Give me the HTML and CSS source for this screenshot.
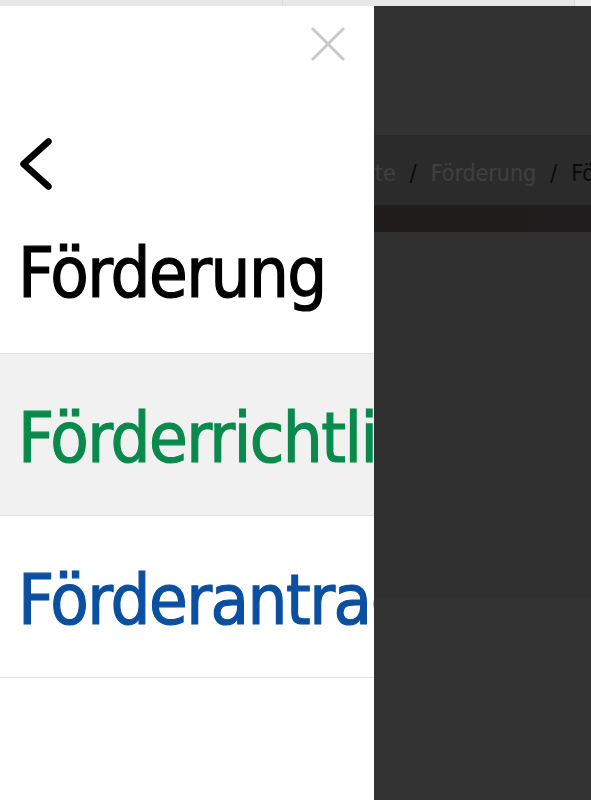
FILE: index.html
```html
<!DOCTYPE html>
<html lang="de">
<head>
    <meta charset="UTF-8">
    <meta name="viewport" content="width=device-width, initial-scale=1.0">
    <title>Förderung</title>
    <link rel="stylesheet" href="styles.css">
</head>
<body>
    <div class="topbar">
        <span class="tab"></span>
        <span class="tab"></span>
        <span class="tab"></span>
    </div>
    <div class="stage">
        <div class="page">
            <header class="site-header"></header>
            <nav class="crumbs">
                <a href="#">Startseite</a>
                <span class="sep">/</span>
                <a href="#">Förderung</a>
                <span class="sep">/</span>
                <span class="current">Förderrichtlinien</span>
            </nav>
            <div class="hero-strip"></div>
            <main class="content"></main>
            <footer class="site-foot"></footer>
        </div>
        <div class="backdrop"></div>
        <aside class="drawer">
            <div class="drawer-head">
                <button class="close" aria-label="Schließen">
                    <svg width="34" height="34" viewBox="0 0 34 34">
                        <path d="M2 2 L32 32 M32 2 L2 32" stroke="#c9c9c9" stroke-width="3" stroke-linecap="round" fill="none"/>
                    </svg>
                </button>
            </div>
            <button class="back" aria-label="Zurück">
                <svg width="32" height="52" viewBox="0 0 32 52">
                    <path d="M28.5 3.5 L3.5 26 L28.5 48.5" stroke="#000" stroke-width="6.5" stroke-linecap="round" stroke-linejoin="round" fill="none"/>
                </svg>
            </button>
            <h2 class="drawer-title">Förderung</h2>
            <ul class="drawer-menu">
                <li class="active"><a href="#">Förderrichtlinien</a></li>
                <li><a href="#">Förderantrag</a></li>
            </ul>
        </aside>
    </div>
</body>
</html>
```

FILE: styles.css
```css
body {
    margin: 0;
    font-family: "DejaVu Sans Condensed", "DejaVu Sans", sans-serif;
    font-stretch: condensed;
    background-color: #c4c4c4;
    overflow: hidden;
}
.topbar {
    display: grid;
    grid-template-columns: 283px 292px 1fr;
    height: 6px;
    background-color: #e7e7e7;
}
.tab {
    border-right: 1px solid #d9d9d9;
}
.tab:last-child {
    border-right: none;
    background-color: #eeeeee;
}
.stage {
    position: relative;
    height: 794px;
    overflow: hidden;
}
.site-header {
    height: 129px;
    background-color: #c2c2c2;
}
.crumbs {
    height: 70px;
    box-sizing: border-box;
    display: flex;
    align-items: center;
    padding: 5px 0 0 295px;
    background-color: #a6a6a6;
    font-size: 23px;
    white-space: nowrap;
}
.crumbs a {
    color: #f2f2f2;
    text-decoration: none;
}
.crumbs .sep {
    margin: 0 14px;
    color: #2a2a2a;
}
.crumbs .current {
    color: #2a2a2a;
}
.hero-strip {
    height: 27px;
    background: linear-gradient(90deg, #8c6a6a 0%, #7c6666 30%, #8c6c6c 45%, #776c6c 70%, #7a7070 100%);
}
.content {
    height: 365px;
    background-color: #bababa;
}
.site-foot {
    height: 203px;
    background-color: #c5c5c5;
}
.backdrop {
    position: absolute;
    inset: 0;
    background-color: rgba(0, 0, 0, 0.74);
}
.drawer {
    position: absolute;
    top: 0;
    left: 0;
    bottom: 0;
    width: 374px;
    background-color: #ffffff;
    overflow: hidden;
}
.drawer-head {
    display: flex;
    justify-content: flex-end;
    padding: 21px 29px 0 0;
}
.close, .back {
    display: block;
    padding: 0;
    border: none;
    background: none;
    cursor: pointer;
}
.close svg, .back svg {
    display: block;
}
.back {
    margin: 77px 0 0 20px;
}
.drawer-title, .drawer-menu a {
    font-size: 70px;
    line-height: 70px;
    letter-spacing: -1.5px;
    -webkit-text-stroke: 1.2px currentColor;
    white-space: nowrap;
}
.drawer-title {
    margin: 48px 0 45px;
    padding-left: 18px;
    font-weight: normal;
    color: #000000;
}
.drawer-menu {
    list-style: none;
    margin: 0;
    padding: 0;
    border-top: 1px solid #e1e1e1;
}
.drawer-menu li {
    height: 161px;
    border-bottom: 1px solid #e1e1e1;
}
.drawer-menu li.active {
    background-color: #f1f1f2;
}
.drawer-menu a {
    display: block;
    padding: 49px 0 0 18px;
    color: #0b4fa1;
    text-decoration: none;
}
.drawer-menu li.active a {
    color: #098a4c;
}
```
